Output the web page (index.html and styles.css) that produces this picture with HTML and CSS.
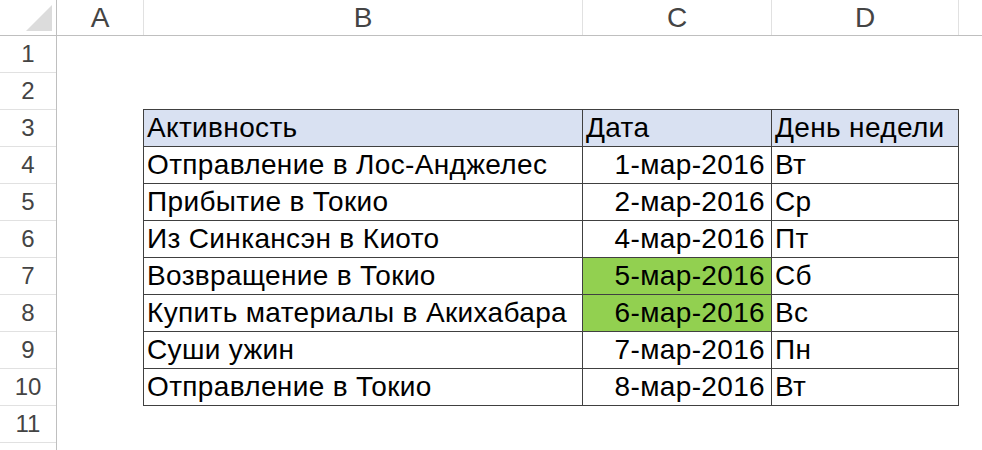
FILE: index.html
```html
<!DOCTYPE html>
<html lang="ru">
<head>
  <meta charset="UTF-8">
  <title>Поездка в Японию</title>
  <link rel="stylesheet" href="styles.css">
</head>
<body>

  <div class="sheet">
    <div class="corner">
      <svg width="30" height="30" viewBox="0 0 30 30"><polygon points="28,2 28,28 2,28" fill="#dcdcdc"/></svg>
    </div>

    <div class="col-heads">
      <div class="col-head col-a">A</div>
      <div class="col-head col-b">B</div>
      <div class="col-head col-c">C</div>
      <div class="col-head col-d">D</div>
      <div class="col-head col-e"></div>
    </div>

    <div class="row-heads">
      <div class="row-head">1</div>
      <div class="row-head">2</div>
      <div class="row-head">3</div>
      <div class="row-head">4</div>
      <div class="row-head">5</div>
      <div class="row-head">6</div>
      <div class="row-head">7</div>
      <div class="row-head">8</div>
      <div class="row-head">9</div>
      <div class="row-head">10</div>
      <div class="row-head">11</div>
    </div>

    <div class="cells">
      <div class="trip-table">
        <div class="cell head">Активность</div>
        <div class="cell head">Дата</div>
        <div class="cell head">День недели</div>

        <div class="cell">Отправление в Лос-Анджелес</div>
        <div class="cell date">1-мар-2016</div>
        <div class="cell">Вт</div>

        <div class="cell">Прибытие в Токио</div>
        <div class="cell date">2-мар-2016</div>
        <div class="cell">Ср</div>

        <div class="cell">Из Синкансэн в Киото</div>
        <div class="cell date">4-мар-2016</div>
        <div class="cell">Пт</div>

        <div class="cell">Возвращение в Токио</div>
        <div class="cell date weekend">5-мар-2016</div>
        <div class="cell">Сб</div>

        <div class="cell">Купить материалы в Акихабара</div>
        <div class="cell date weekend">6-мар-2016</div>
        <div class="cell">Вс</div>

        <div class="cell">Суши ужин</div>
        <div class="cell date">7-мар-2016</div>
        <div class="cell">Пн</div>

        <div class="cell">Отправление в Токио</div>
        <div class="cell date">8-мар-2016</div>
        <div class="cell">Вт</div>
      </div>
    </div>
  </div>

</body>
</html>
```

FILE: styles.css
```css
body {
  margin: 0;
  background: #fff;
  font-family: 'Liberation Sans', Arial, sans-serif;
  color: #000;
}
.sheet {
  display: grid;
  grid-template-columns: 57px 1fr;
  grid-template-rows: 36px 1fr;
  width: 982px;
  height: 450px;
  overflow: hidden;
}
.corner {
  box-sizing: border-box;
  border-right: 1px solid #bfbfbf;
  border-bottom: 1px solid #bfbfbf;
  display: flex;
  justify-content: flex-end;
  align-items: flex-end;
  padding: 0 2px 2px 0;
}
.corner svg {
  display: block;
}
.col-heads {
  display: flex;
  box-sizing: border-box;
  border-bottom: 1px solid #bfbfbf;
}
.col-head {
  box-sizing: border-box;
  border-right: 1px solid #e1e1e1;
  text-align: center;
  font-size: 28px;
  line-height: 35px;
  color: #444;
}
.col-a { width: 87px; }
.col-b { width: 439px; }
.col-c { width: 189px; }
.col-d { width: 187px; }
.col-e { flex: 1; border-right: none; }
.row-heads {
  box-sizing: border-box;
  border-right: 1px solid #bfbfbf;
}
.row-head {
  box-sizing: border-box;
  height: 37px;
  border-bottom: 1px solid #e1e1e1;
  text-align: center;
  font-size: 24px;
  line-height: 36px;
  color: #444;
}
.cells {
  padding: 73px 0 0 86px;
}
.trip-table {
  display: grid;
  grid-template-columns: 438px 188px 186px;
  grid-auto-rows: 36px;
  gap: 1px;
  width: max-content;
  background: #404040;
  border: 1px solid #404040;
}
.cell {
  background: #fff;
  font-size: 28px;
  letter-spacing: 0.35px;
  line-height: 36px;
  padding: 0 3px;
  white-space: nowrap;
  overflow: hidden;
}
.cell.head {
  background: #d9e1f2;
}
.cell.date {
  text-align: right;
  padding-right: 6px;
}
.cell.weekend {
  background: #92d050;
}
```
